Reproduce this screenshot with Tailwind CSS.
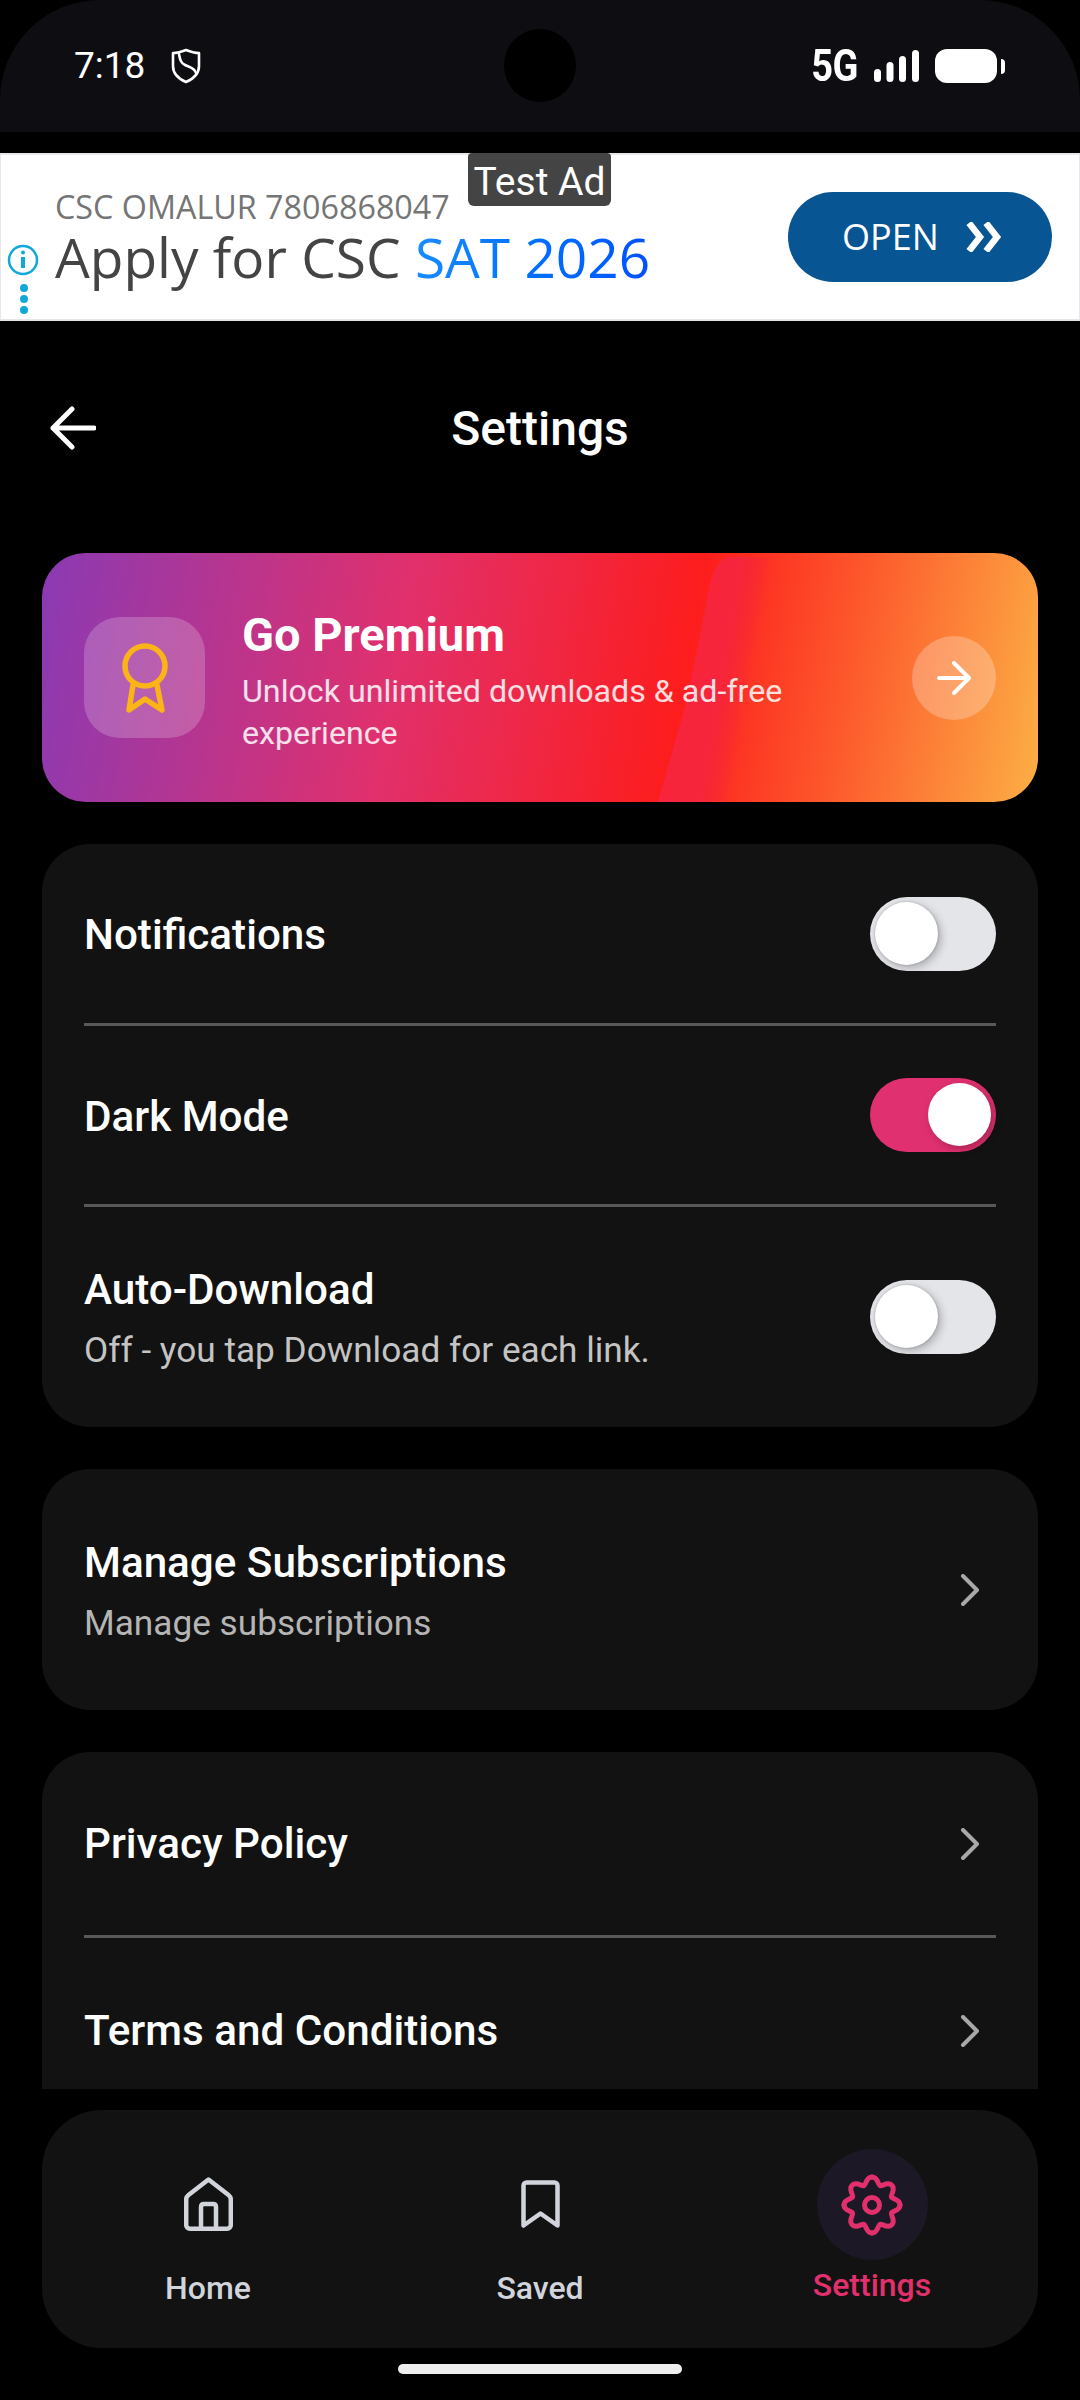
<!DOCTYPE html>
<html lang="en">
<head>
<meta charset="UTF-8">
<meta name="viewport" content="width=device-width, initial-scale=1.0">
<title>Settings</title>
<script src="https://cdn.jsdelivr.net/npm/@tailwindcss/browser@4"></script>
</head>
<body class="bg-black w-[1080px] h-[2400px] overflow-hidden flex flex-col font-['Roboto',sans-serif] text-white">
  <!-- status bar -->
  <header class="h-[132px] shrink-0 bg-[#0e0e12] rounded-t-[100px] relative flex justify-between items-start pl-[74px] pr-[75px] pt-[44px]">
    <div class="flex items-center gap-[26px]">
      <span class="text-[37px] leading-[44px]">7:18</span>
      <svg class="w-[30px] h-[36px]" viewBox="0 0 30 36" fill="none" stroke="white" stroke-width="2.6" stroke-linejoin="round" stroke-linecap="round"><path d="M15 2c5 2 9 3 13 3v13c0 8-6 13-13 16C8 31 2 26 2 18V5c4 0 8-1 13-3z"/><path d="M8 6c1 6 2 9 6 11s10 3 11 8"/></svg>
    </div>
    <div class="absolute left-[504px] top-[29px] w-[72px] h-[73px] rounded-full bg-black"></div>
    <div class="flex items-center h-[44px] gap-[16px]">
      <span class="text-[38px] leading-[44px] font-bold tracking-[-0.5px] scale-y-[1.18]">5G</span>
      <svg class="w-[45px] h-[32px]" viewBox="0 0 45 32" fill="white"><rect x="0" y="19" width="7" height="13" rx="3.5"/><rect x="12.500" y="12" width="7" height="20" rx="3.500"/><rect x="25" y="6" width="7" height="26" rx="3.5"/><rect x="38" y="0" width="7" height="32" rx="3.5"/></svg>
      <div class="flex items-center gap-[4px]">
        <div class="w-[62px] h-[34px] rounded-[12px] bg-white"></div>
        <div class="w-[4px] h-[15px] rounded-r-full bg-white"></div>
      </div>
    </div>
  </header>

  <!-- ad banner -->
  <section class="mt-[21px] h-[168px] shrink-0 bg-white border-y-2 border-x border-[#e5e7eb] relative font-['Open_Sans',sans-serif]">
    <div class="absolute left-[467px] top-[-2px] w-[143px] h-[53px] bg-[#444444] rounded-b-[6px] rounded-t-[4px] text-[39px] leading-[58px] text-center font-['Roboto',sans-serif] text-white">Test Ad</div>
    <div class="pl-[54px] pt-[31px]">
      <p class="text-[32.3px] leading-[40px] text-[#757575]">CSC OMALUR 7806868047</p>
      <p class="text-[55px] leading-[62px] text-[#444444]">Apply for CSC <span class="bg-linear-to-r from-[#1a8cff] to-[#0050ff] bg-clip-text text-transparent">SAT 2026</span></p>
    </div>
    <svg class="absolute left-[6px] top-[88px] w-[32px] h-[34px]" viewBox="0 0 32 34" fill="none" stroke="#10a8d8" stroke-width="2.5"><circle cx="16" cy="17" r="14"/><path d="M16 14v11" stroke-width="4"/><circle cx="16" cy="9.5" r="2" fill="#10a8d8" stroke="none"/></svg>
    <div class="absolute left-[19px] top-[129px] flex flex-col gap-[3px]">
      <span class="w-[8px] h-[8px] rounded-full bg-[#10a8d8]"></span>
      <span class="w-[8px] h-[8px] rounded-full bg-[#10a8d8]"></span>
      <span class="w-[8px] h-[8px] rounded-full bg-[#10a8d8]"></span>
    </div>
    <button class="absolute left-[787px] top-[37px] w-[264px] h-[90px] rounded-full bg-[#075592] flex items-center justify-center gap-[27px] pl-[4px] text-[36px] text-white">
      <span>OPEN</span>
      <svg class="w-[36px] h-[30px]" viewBox="0 0 36 30" fill="none" stroke="white" stroke-width="6.500"><path d="M3 1 14 15 3 29M20 1 31 15 20 29"/></svg>
    </button>
  </section>

  <!-- title bar -->
  <div class="h-[232px] shrink-0 pt-[71px] relative">
    <svg class="absolute left-[50px] top-[85px] w-[46px] h-[44px]" viewBox="0 0 46 44" fill="none" stroke="white" stroke-width="5" stroke-linecap="round" stroke-linejoin="round"><path d="M44 22H3M22 3 3 22l19 19"/></svg>
    <h1 class="text-center text-[48px] leading-[74px] font-medium">Settings</h1>
  </div>

  <!-- scrolling content -->
  <main class="mx-[42px] h-[1536px] shrink-0 overflow-hidden flex flex-col gap-[42px]">
    <a class="h-[249px] shrink-0 rounded-[44px] overflow-hidden bg-[linear-gradient(100deg,#8a3ab4_0%,#e1306c_36%,#fd1d1d_64%,#fd5a2c_80%,#fcaf45_100%)] flex items-center pl-[42px] pr-[42px] relative">
      <svg class="absolute left-0 top-0 w-[996px] h-[249px]" viewBox="0 0 996 249">
        <defs><linearGradient id="fade" x1="678" y1="122" x2="712" y2="128" gradientUnits="userSpaceOnUse"><stop offset="0" stop-color="#f6253c"/><stop offset="1" stop-color="#f6253c" stop-opacity="0"/></linearGradient></defs>
        <path d="M690 4c-12 0-20 12-25 43l-20 100-29 102h110l40-245z" fill="url(#fade)"/>
      </svg>
      <div class="w-[121px] h-[121px] rounded-[36px] bg-white/20 flex items-center justify-center relative">
        <svg class="w-[46px] h-[70px]" viewBox="0 0 46 70" fill="none" stroke="#fbb417" stroke-width="5.5" stroke-linecap="round" stroke-linejoin="round"><circle cx="23" cy="23" r="20"/><path d="M11 42 7 67l16-11 17 11-5-25"/></svg>
      </div>
      <div class="ml-[37px] flex-1 relative pt-[3px]">
        <h2 class="text-[47px] leading-[60px] font-bold">Go Premium</h2>
        <p class="text-[32.2px] leading-[42px] text-white/85 mt-[5px] w-[600px]">Unlock unlimited downloads &amp; ad-free experience</p>
      </div>
      <div class="w-[84px] h-[84px] rounded-full bg-white/25 flex items-center justify-center relative">
        <svg class="w-[36px] h-[34px]" viewBox="0 0 36 34" fill="none" stroke="white" stroke-width="4" stroke-linecap="round" stroke-linejoin="round"><path d="M3 17h30M18 2l15 15-15 15"/></svg>
      </div>
    </a>

    <div class="shrink-0 rounded-[48px] bg-[#121212] px-[42px]">
      <div class="h-[182px] flex items-center justify-between border-b-[3px] border-[#585858]">
        <span class="text-[42.2px] font-medium pt-[3px]">Notifications</span>
        <div class="w-[126px] h-[74px] rounded-full bg-[#e3e5e9] p-[5px]"><div class="w-[63px] h-[63px] rounded-full bg-white shadow-[3px_3px_8px_rgba(0,0,0,0.25),0_0_3px_rgba(0,0,0,0.2)]"></div></div>
      </div>
      <div class="h-[181px] flex items-center justify-between border-b-[3px] border-[#585858]">
        <span class="text-[42.2px] font-medium pt-[3px]">Dark Mode</span>
        <div class="w-[126px] h-[74px] rounded-full bg-[#e03070] p-[5px] flex justify-end"><div class="w-[63px] h-[63px] rounded-full bg-white shadow-[3px_3px_8px_rgba(0,0,0,0.25)]"></div></div>
      </div>
      <div class="h-[220px] flex items-center justify-between">
        <div class="pt-[2px]">
          <p class="text-[42.2px] leading-[52px] font-medium">Auto-Download</p>
          <p class="text-[35.2px] leading-[44px] text-[#c4c4c4] mt-[12px]">Off - you tap Download for each link.</p>
        </div>
        <div class="w-[126px] h-[74px] rounded-full bg-[#e3e5e9] p-[5px]"><div class="w-[63px] h-[63px] rounded-full bg-white shadow-[3px_3px_8px_rgba(0,0,0,0.25),0_0_3px_rgba(0,0,0,0.2)]"></div></div>
      </div>
    </div>

    <div class="shrink-0 h-[241px] rounded-[48px] bg-[#121212] px-[42px] flex items-center justify-between">
      <div class="pt-[2px]">
        <p class="text-[42.2px] leading-[52px] font-medium">Manage Subscriptions</p>
        <p class="text-[35.2px] leading-[44px] text-[#b5b5b5] mt-[12px]">Manage subscriptions</p>
      </div>
      <svg class="w-[20px] h-[32px] mr-[16px]" viewBox="0 0 20 32" fill="none" stroke="#a8a8a8" stroke-width="4" stroke-linecap="round" stroke-linejoin="round"><path d="M3 2l14 14L3 30"/></svg>
    </div>

    <div class="shrink-0 rounded-t-[48px] bg-[#121212] px-[42px] flex-1">
      <div class="h-[186px] flex items-center justify-between border-b-[3px] border-[#585858]">
        <span class="text-[42.2px] font-medium">Privacy Policy</span>
        <svg class="w-[20px] h-[32px] mr-[16px]" viewBox="0 0 20 32" fill="none" stroke="#a8a8a8" stroke-width="4" stroke-linecap="round" stroke-linejoin="round"><path d="M3 2l14 14L3 30"/></svg>
      </div>
      <div class="h-[186px] flex items-center justify-between">
        <span class="text-[42.2px] font-medium">Terms and Conditions</span>
        <svg class="w-[20px] h-[32px] mr-[16px]" viewBox="0 0 20 32" fill="none" stroke="#a8a8a8" stroke-width="4" stroke-linecap="round" stroke-linejoin="round"><path d="M3 2l14 14L3 30"/></svg>
      </div>
    </div>
  </main>

  <!-- bottom nav -->
  <nav class="mt-[21px] mx-[42px] h-[238px] shrink-0 rounded-[60px] bg-[#121212] grid grid-cols-3">
    <div class="flex flex-col items-center pt-[67px] text-[#d1d5db]">
      <svg class="w-[49px] h-[54px]" viewBox="0 0 49 54" fill="none" stroke="#d1d5db" stroke-width="4.5" stroke-linejoin="round" stroke-linecap="round"><path d="M24.500 2.500 44.500 18q2.300 1.800 2.300 4.500V48a3.700 3.700 0 0 1-3.700 3.700H5.900A3.700 3.700 0 0 1 2.200 48V22.500q0-2.700 2.300-4.500z"/><path d="M17 51.500V30q0-3 3-3h9q3 0 3 3v21.500"/></svg>
      <span class="text-[32px] leading-[38px] font-medium mt-[38px]">Home</span>
    </div>
    <div class="flex flex-col items-center pt-[70px] text-[#d1d5db]">
      <svg class="w-[39px] h-[48px]" viewBox="0 0 39 48" fill="none" stroke="#d1d5db" stroke-width="4.5" stroke-linejoin="round" stroke-linecap="round"><path d="M2.500 45.500V5.500a3 3 0 0 1 3-3h28a3 3 0 0 1 3 3v40l-17-12z"/></svg>
      <span class="text-[32px] leading-[38px] font-medium mt-[41px]">Saved</span>
    </div>
    <div class="flex flex-col items-center pt-[39px] text-[#e1306c]">
      <div class="w-[111px] h-[111px] rounded-full bg-[#1c1826] flex items-center justify-center">
        <svg class="w-[64px] h-[64px]" viewBox="0 0 64 64" fill="none" stroke="#e1306c" stroke-width="5" stroke-linecap="round" stroke-linejoin="round">
          <path d="M32 4C38 4 37.730 11.640 40.040 12.600 42.350 13.560 47.560 7.960 51.800 12.200 56.040 16.440 50.440 21.650 51.400 23.960 52.360 26.270 60 26 60 32"/>
          <path d="M32 4C38 4 37.730 11.640 40.040 12.600 42.350 13.560 47.560 7.960 51.800 12.200 56.040 16.440 50.440 21.650 51.400 23.960 52.360 26.270 60 26 60 32" transform="rotate(90 32 32)"/>
          <path d="M32 4C38 4 37.730 11.640 40.040 12.600 42.350 13.560 47.560 7.960 51.800 12.200 56.040 16.440 50.440 21.650 51.400 23.960 52.360 26.270 60 26 60 32" transform="rotate(180 32 32)"/>
          <path d="M32 4C38 4 37.730 11.640 40.040 12.600 42.350 13.560 47.560 7.960 51.800 12.200 56.040 16.440 50.440 21.650 51.400 23.960 52.360 26.270 60 26 60 32" transform="rotate(270 32 32)"/>
          <circle cx="32" cy="32" r="7.500"/>
        </svg>
      </div>
      <span class="text-[32px] leading-[38px] font-medium mt-[6px]">Settings</span>
    </div>
  </nav>

  <div class="mt-[16px] mx-auto w-[284px] h-[10px] shrink-0 rounded-full bg-[#eeeeee]"></div>
</body>
</html>
